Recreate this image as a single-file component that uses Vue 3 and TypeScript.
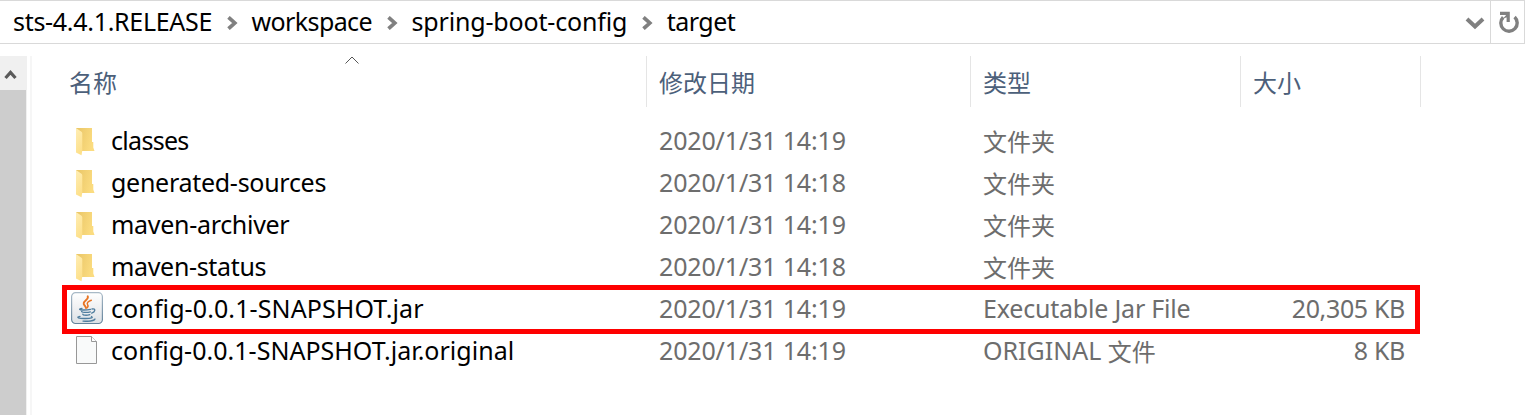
<script setup lang="ts">
interface Entry {
  kind: 'folder' | 'jar' | 'file'
  name: string
  tracking: number
  date: string
  type: string
  typeSuffix: string
  size: string
}

const crumbs: { label: string; tracking: number }[] = [
  { label: 'sts-4.4.1.RELEASE', tracking: -0.3 },
  { label: 'workspace', tracking: -0.6 },
  { label: 'spring-boot-config', tracking: -0.17 },
  { label: 'target', tracking: -0.5 },
]

const columns = ['名称', '修改日期', '类型', '大小']

const entries: Entry[] = [
  { kind: 'folder', name: 'classes', tracking: -0.7, date: '2020/1/31 14:19', type: '', typeSuffix: '文件夹', size: '' },
  { kind: 'folder', name: 'generated-sources', tracking: -0.28, date: '2020/1/31 14:18', type: '', typeSuffix: '文件夹', size: '' },
  { kind: 'folder', name: 'maven-archiver', tracking: -0.3, date: '2020/1/31 14:19', type: '', typeSuffix: '文件夹', size: '' },
  { kind: 'folder', name: 'maven-status', tracking: -0.33, date: '2020/1/31 14:18', type: '', typeSuffix: '文件夹', size: '' },
  { kind: 'jar', name: 'config-0.0.1-SNAPSHOT.jar', tracking: 0.1, date: '2020/1/31 14:19', type: 'Executable Jar File', typeSuffix: '', size: '20,305 KB' },
  { kind: 'file', name: 'config-0.0.1-SNAPSHOT.jar.original', tracking: 0.02, date: '2020/1/31 14:19', type: 'ORIGINAL ', typeSuffix: '文件', size: '8 KB' },
]

const spacing = (value: number) => ({ letterSpacing: `${value}px` })
</script>

<template>
  <div class="window">
    <header class="address">
      <div class="crumbs">
        <template v-for="(c, i) in crumbs" :key="c.label">
          <svg v-if="i" class="sep" width="11" height="14" viewBox="0 0 11 14"><path d="M1.500 1.300 7.800 7l-6.300 5.700" fill="none" stroke="#808080" stroke-width="3.700" /></svg>
          <span class="crumb" :style="spacing(c.tracking)">{{ c.label }}</span>
        </template>
      </div>
      <svg class="drop" width="20" height="14" viewBox="0 0 20 14"><path d="M2 3 10 10.500 18 3" fill="none" stroke="#808080" stroke-width="4" /></svg>
      <div class="refresh">
        <svg width="22" height="24" viewBox="0 0 22 24"><path d="M5.200 7.200A8.200 8.200 0 1 0 16.600 7" fill="none" stroke="#808080" stroke-width="3.400" /><path d="M2 3.400h8.200v8.600" fill="none" stroke="#808080" stroke-width="3.200" /><path d="M5 8.500 10 3v4z" fill="#808080" /></svg>
      </div>
    </header>
    <main class="body">
      <div class="scroll">
        <svg class="up" width="27" height="34" viewBox="0 0 27 34"><path d="M5.500 22 10.500 16.500 15.500 22" fill="none" stroke="#5a5a5a" stroke-width="3.200" /></svg>
        <div class="thumb"></div>
      </div>
      <section class="list">
        <div class="row head">
          <div v-for="(c, i) in columns" :key="c" class="cell">
            {{ c }}
            <svg v-if="i === 0" class="sort" width="14" height="9" viewBox="0 0 14 9"><path d="M.5 7.500 7 1l6.500 6.500" fill="none" stroke="#555" /></svg>
          </div>
        </div>
        <div v-for="e in entries" :key="e.name" class="row" :class="e.kind">
          <div class="cell name">
            <svg v-if="e.kind === 'folder'" class="icon" width="36" height="34" viewBox="0 0 36 34">
              <defs>
                <linearGradient id="back" x1="0" x2="1" y2=".3"><stop offset="0" stop-color="#e9c566" /><stop offset="1" stop-color="#fbdc80" /></linearGradient>
                <linearGradient id="front" y2="1" x2=".3"><stop offset="0" stop-color="#ffeeb5" /><stop offset="1" stop-color="#fde08b" /></linearGradient>
              </defs>
              <path d="M7 4h16v14h1.300v5.500l1.200 3.500H7z" fill="url(#back)" />
              <path d="M7 4l5.500 3.700q.8.500.8 1.500v17.300l-.8 4.800L7 28.500z" fill="url(#front)" />
            </svg>
            <svg v-else-if="e.kind === 'jar'" class="icon" width="36" height="34" viewBox="0 0 36 34">
              <defs>
                <linearGradient id="tile" x2="0" y2="1"><stop offset="0" stop-color="#fff" /><stop offset=".5" stop-color="#eff0f2" /><stop offset="1" stop-color="#dce1e6" /></linearGradient>
                <linearGradient id="edge" x2="0" y2="1"><stop offset="0" stop-color="#a9bac7" /><stop offset="1" stop-color="#64839c" /></linearGradient>
              </defs>
              <rect x="2.600" y=".7" width="30.800" height="30.800" rx="4" fill="url(#tile)" stroke="url(#edge)" stroke-width="1.200" />
              <g fill="none" stroke-linecap="round">
                <path d="M18.700 4.300c1.700 3.300-4.600 4.300-4 7.500.2 1.500 2 2.300 2.300 4.200" stroke="#e87524" stroke-width="1.900" />
                <path d="M22.300 8.200c-2.400.9-5 2.400-3.700 4.500.8 1.200.5 2.300-.7 3.200" stroke="#e87524" stroke-width="1.500" />
                <g stroke="#4f7d9e" stroke-width="1.300">
                  <path d="M13 16.300c-3.500.8-3.200 1.600 1 1.700q4.500.1 7.500-.7" />
                  <path d="M12.800 19.300c-1.200 1.200 5.200 1.400 8.600.5" />
                  <path d="M13.800 22.200c-.3 1.200 4 1.400 7 .4" />
                  <path d="M23 17c4.200-.8 3.300 3-.3 4.200" />
                  <path d="M11 24.300c-4.200 1-2 2.300 5.500 2.200 6 0 8-.9 6-2" />
                  <path d="M14 29.100c5.500.5 11.300-.3 12-2.100" />
                </g>
              </g>
            </svg>
            <svg v-else class="icon" width="36" height="34" viewBox="0 0 36 34">
              <path d="M7.500 2.500h15l5 5v22h-20z" fill="#f9fafa" stroke="#989898" />
              <path d="M22.500 2.500v5h5" fill="#fff" stroke="#989898" />
            </svg>
            <span class="label" :style="spacing(e.tracking)">{{ e.name }}</span>
          </div>
          <div class="cell date">{{ e.date }}</div>
          <div class="cell type"><span :class="{ tight: !e.typeSuffix }">{{ e.type }}</span><span class="han">{{ e.typeSuffix }}</span></div>
          <div class="cell size">{{ e.size }}</div>
        </div>
      </section>
    </main>
  </div>
</template>

<style>
body { background: #fff; }
</style>
<style scoped>
.window { width: 1528px; height: 415px; overflow: hidden; background: #fff; font: 25px/40px "Noto Sans", "Noto Sans CJK SC", sans-serif; color: #000; }
.address { box-sizing: border-box; width: 1525px; height: 44px; border: 1px solid #d9d9d9; border-left: 0; display: flex; align-items: center; }
.crumbs { display: flex; align-items: center; flex: 1; padding-left: 13px; }
.crumb { margin-bottom: 2px; }
.sep { margin: 2px 13.5px 0 15px; }
.drop { margin: 1px 5px 0 0; }
.refresh { width: 33px; height: 42px; border-left: 1px solid #d9d9d9; display: flex; align-items: center; justify-content: center; }
.refresh svg { margin-left: 3px; }
.body { display: flex; height: 359px; margin-top: 12px; }
.scroll { width: 27px; background: #f0f0f0; margin-right: 3px; }
.up { display: block; }
.thumb { width: 26px; height: 325px; background: #cdcdcd; }
.list { border-left: 2px solid #f6f6f6; flex: 1; }
.row { position: relative; box-sizing: border-box; height: 42px; display: grid; grid-template-columns: 615px 324px 270px 180px; grid-template-rows: 100%; white-space: nowrap; color: #6d6d6d; }
.cell { padding-left: 12px; }
.head { height: 51px; margin-bottom: 13px; color: #4c607a; font-size: 24px; line-height: 53px; }
.head .cell { box-sizing: border-box; border-right: 1px solid #e5e5e5; position: relative; }
.head .cell:first-child { padding-left: 37px; }
.sort { position: absolute; left: 313px; top: 0; }
.name { color: #000; display: flex; align-items: center; padding-left: 37px; }
.icon { margin-right: 6px; }
.label { margin-bottom: 2px; }
.date { letter-spacing: -0.15px; }
.type { white-space: pre; }
.tight { letter-spacing: -0.2px; }
.han { position: relative; top: 1px; font-size: 24px; }
.size { text-align: right; padding-right: 16px; letter-spacing: -0.35px; }
.jar::after { content: ""; position: absolute; box-sizing: border-box; left: 30px; top: -3px; width: 1358px; height: 49px; border: 5px solid #fe0000; }
</style>
